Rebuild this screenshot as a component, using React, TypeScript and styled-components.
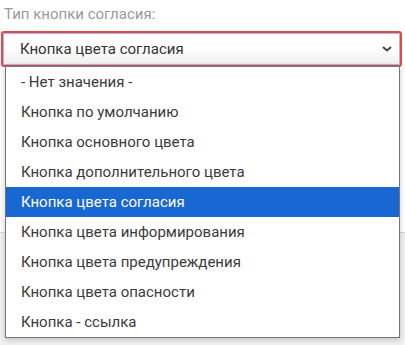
import React from "react";
import styled, { createGlobalStyle } from "styled-components";

const GlobalStyle = createGlobalStyle`
  html, body { margin: 0; padding: 0; background: #fff; }
  body { font-family: Roboto, "Noto Sans", Arial, sans-serif; }
`;

const Page = styled.div`
  position: relative;
  width: 405px;
  height: 345px;
  overflow: hidden;
  display: flex;
  flex-direction: column;
`;

const FormArea = styled.div`
  height: 232px;
  padding: 3px 3px 0 1px;
  box-sizing: border-box;
  background: #fff;
`;

const Label = styled.div`
  font-size: 15px;
  line-height: 22px;
  color: #9a9a9a;
  padding-left: 3px;
  margin-bottom: 6px;
`;

const SelectBox = styled.div`
  height: 36px;
  box-sizing: border-box;
  border: 2px solid #ee4444;
  border-radius: 3px;
  padding: 0;
`;

const SelectInner = styled.div`
  height: 100%;
  box-sizing: border-box;
  border: 1px solid #9fbde6;
  background: linear-gradient(#ffffff 0%, #ffffff 45%, #efefef 100%);
  display: flex;
  align-items: center;
  justify-content: space-between;
  padding: 0 6px 0 16px;
  font-size: 15px;
  color: #333;
`;

const Footer = styled.div`
  flex: 1;
  background: #f1f1f1;
  border-top: 1px solid #d8d8d8;
`;

const Dropdown = styled.ul`
  position: absolute;
  top: 66px;
  left: 5px;
  width: 395px;
  margin: 0;
  padding: 0;
  list-style: none;
  background: #fff;
  border: 1px solid #767676;
  box-sizing: border-box;
  box-shadow: 0 2px 6px rgba(0, 0, 0, 0.2);
`;

const Option = styled.li<{ $selected?: boolean }>`
  height: 30px;
  display: flex;
  align-items: center;
  padding-left: 15px;
  font-size: 15px;
  color: ${(p) => (p.$selected ? "#fff" : "#3b3b3b")};
  background: ${(p) => (p.$selected ? "#1967d2" : "transparent")};
`;

const options = [
  "- Нет значения -",
  "Кнопка по умолчанию",
  "Кнопка основного цвета",
  "Кнопка дополнительного цвета",
  "Кнопка цвета согласия",
  "Кнопка цвета информирования",
  "Кнопка цвета предупреждения",
  "Кнопка цвета опасности",
  "Кнопка - ссылка",
];

export default function App() {
  return (
    <Page>
      <GlobalStyle />
      <FormArea>
        <Label>Тип кнопки согласия:</Label>
        <SelectBox>
          <SelectInner>
            <span>Кнопка цвета согласия</span>
            <svg width="12" height="8" viewBox="0 0 12 8">
              <path d="M2 2 L6 5.5 L10 2" fill="none" stroke="#444" strokeWidth="2" />
            </svg>
          </SelectInner>
        </SelectBox>
      </FormArea>
      <Footer />
      <Dropdown>
        {options.map((o) => (
          <Option key={o} $selected={o === "Кнопка цвета согласия"}>
            {o}
          </Option>
        ))}
      </Dropdown>
    </Page>
  );
}
